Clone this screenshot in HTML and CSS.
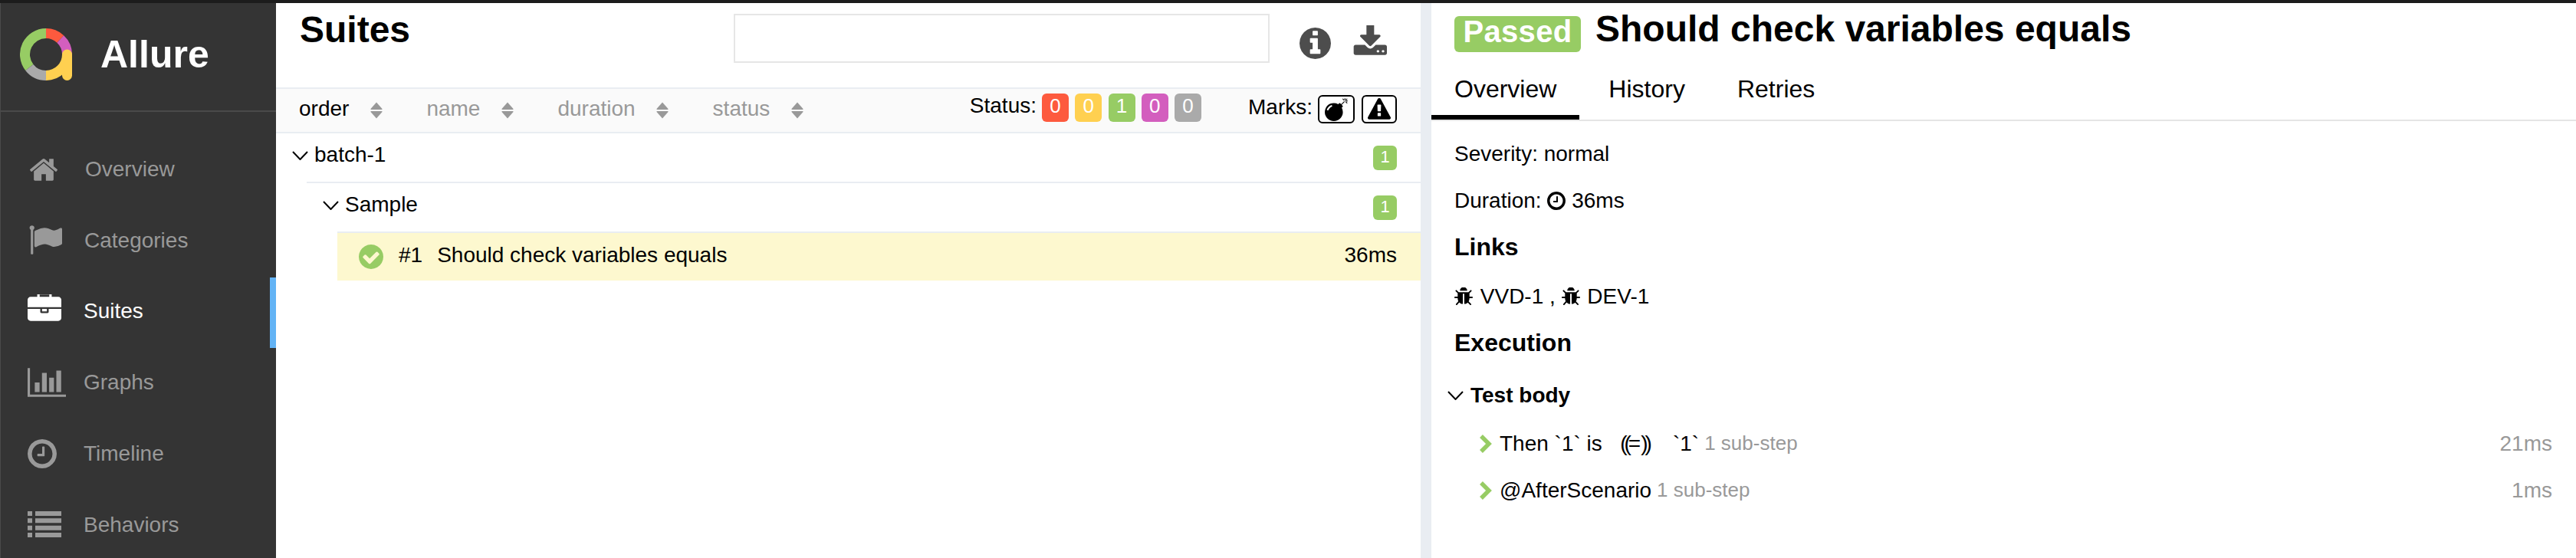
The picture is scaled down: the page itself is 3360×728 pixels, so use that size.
FILE: index.html
```html
<!DOCTYPE html>
<html lang="en">
<head>
<meta charset="utf-8">
<title>Allure</title>
<link rel="stylesheet" href="styles.css">
</head>
<body>
<svg class="defs" width="0" height="0" aria-hidden="true">
  <defs>
    <symbol id="sort" viewBox="0 0 16 22"><path class="sort-up" d="M8 0.500 15.500 9q.5 1-.8 1H1.300q-1.300 0-.8-1z"/><path class="sort-down" d="M1.300 12h13.400q1.300 0 .8 1L8 21.500.5 13q-.5-1 .8-1z"/></symbol>
    <symbol id="chev" viewBox="0 0 21 12"><path d="M1 1l9.500 10L20 1" fill="none" stroke="currentColor" stroke-width="2"/></symbol>
    <symbol id="clock" viewBox="128 128 1536 1536"><path fill="currentColor" d="M1024 544v448q0 14-9 23t-23 9h-320q-14 0-23-9t-9-23v-64q0-14 9-23t23-9h224v-352q0-14 9-23t23-9h64q14 0 23 9t9 23zm416 352q0-148-73-273t-198-198-273-73-273 73-198 198-73 273 73 273 198 198 273 73 273-73 198-198 73-273zm224 0q0 209-103 385.500t-279.500 279.500-385.500 103-385.500-103-279.500-279.500-103-385.500 103-385.500 279.500-279.500 385.500-103 385.500 103 279.500 279.500 103 385.500z"/></symbol>
    <symbol id="bug" viewBox="96 128 1600 1536"><path fill="currentColor" d="M1696 960q0 26-19 45t-45 19h-224q0 171-67 290l208 209q19 19 19 45t-19 45q-18 19-45 19t-45-19l-198-197q-5 5-15 13t-42 28.500-65 36.500-82 29-97 13v-896h-128v896q-51 0-101.500-13.500t-87-33-66-39-43.500-32.500l-15-14-183 207q-20 21-48 21-24 0-43-16-19-18-20.500-44.500t15.500-46.500l202-227q-58-114-58-274h-224q-26 0-45-19t-19-45 19-45 45-19h224v-294l-173-173q-19-19-19-45t19-45 45-19 45 19l173 173h844l173-173q19-19 45-19t45 19 19 45-19 45l-173 173v294h224q26 0 45 19t19 45zm-480-576h-640q0-133 93.500-226.500t226.500-93.500 226.500 93.500 93.500 226.500z"/></symbol>
    <symbol id="step" viewBox="0 0 17 24"><path d="M3 2l10 10L3 22" fill="none" stroke="currentColor" stroke-width="5.500"/></symbol>
  </defs>
</svg>
<div class="app">
  <aside class="side">
    <div class="brand">
      <svg class="logo" viewBox="0 0 68 68" aria-hidden="true">
        <g fill="none" stroke-width="13">
          <path stroke="#97cc64" d="M12.330 50.930A27.500 27.500 0 0 1 34 6.500"/>
          <path stroke="#fd5a3e" d="M34 6.500A27.500 27.500 0 0 1 52.760 13.900"/>
          <path stroke="#d35ebe" d="M52.760 13.900A27.500 27.500 0 0 1 61.500 34"/>
          <path stroke="#aaaaaa" d="M34 61.500A27.500 27.500 0 0 1 12.330 50.930"/>
          <path stroke="#ffd050" d="M61.500 34A27.500 27.500 0 0 1 34 61.500"/>
          <path stroke="#ffd050" stroke-linecap="round" d="M61.500 34V61.500"/>
        </g>
      </svg>
      <span class="brand-name">Allure</span>
    </div>
    <nav class="nav">
      <a class="nav-item"><svg class="nav-icon i-home" viewBox="0 128 1792 1408"><path fill="currentColor" d="M1472 992v480q0 26-19 45t-45 19h-384v-384h-256v384h-384q-26 0-45-19t-19-45v-480q0-1 .5-3t.5-3l575-474 575 474q1 2 1 6zm223-69l-62 74q-8 9-21 11h-3q-13 0-21-7l-692-577-692 577q-12 8-24 7-13-2-21-11l-62-74q-8-10-7-23.500t11-21.500l719-599q32-26 76-26t76 26l244 204v-195q0-14 9-23t23-9h192q14 0 23 9t9 23v408l219 182q10 8 11 21.500t-7 23.500z"/></svg><span>Overview</span></a>
      <a class="nav-item"><svg class="nav-icon i-flag" viewBox="0 128 1792 1536"><path fill="currentColor" d="M320 256q0 72-64 110v1266q0 13-9.500 22.500t-22.500 9.500h-64q-13 0-22.500-9.500t-9.500-22.500v-1266q-64-38-64-110 0-53 37.500-90.500t90.500-37.500 90.500 37.500 37.500 90.500zm1472 64v763q0 25-12.500 38.500t-39.500 27.500q-215 116-369 116-61 0-123.500-22t-108.500-48-115.500-48-142.500-22q-192 0-464 146-17 9-33 9-26 0-45-19t-19-45v-742q0-32 31-55 21-14 79-43 236-120 421-120 107 0 200 29t219 88q38 19 88 19 54 0 117.500-21t110-47 88-47 54.500-21q26 0 45 19t19 45z"/></svg><span>Categories</span></a>
      <a class="nav-item is-active"><svg class="nav-icon i-brief" viewBox="0 128 1792 1536"><path fill="currentColor" d="M640 256h512v-128h-512v128zm1152 640v480q0 66-47 113t-113 47h-1472q-66 0-113-47t-47-113v-480h672v160q0 26 19 45t45 19h320q26 0 45-19t19-45v-160h672zm-768 0v128h-256v-128h256zm768-480v384h-1792v-384q0-66 47-113t113-47h352v-160q0-40 28-68t68-28h576q40 0 68 28t28 68v160h352q66 0 113 47t47 113z"/></svg><span>Suites</span></a>
      <a class="nav-item"><svg class="nav-icon i-chart" viewBox="0 128 2048 1536"><path fill="currentColor" d="M640 896v512h-256v-512h256zm384-512v1024h-256v-1024h256zm1024 1152v128h-2048v-1536h128v1408h1920zm-640-896v768h-256v-768h256zm384-384v1152h-256v-1152h256z"/></svg><span>Graphs</span></a>
      <a class="nav-item"><svg class="nav-icon i-clock"><use href="#clock"/></svg><span>Timeline</span></a>
      <a class="nav-item"><svg class="nav-icon i-list" viewBox="0 0 44 34"><path fill="currentColor" d="M0 0h6v6H0zM10 0h34v6H10zM0 9.300h6v6H0zM10 9.300h34v6H10zM0 18.700h6v6H0zM10 18.700h34v6H10zM0 28h6v6H0zM10 28h34v6H10z"/></svg><span>Behaviors</span></a>
    </nav>
  </aside>
  <main class="pane-main">
    <header class="head">
      <h2 class="head-title">Suites</h2>
      <div class="search"></div>
      <svg class="head-info" viewBox="128 128 1536 1536"><path fill="currentColor" d="M1152 1376v-160q0-14-9-23t-23-9h-96v-512q0-14-9-23t-23-9h-320q-14 0-23 9t-9 23v160q0 14 9 23t23 9h96v320h-96q-14 0-23 9t-9 23v160q0 14 9 23t23 9h448q14 0 23-9t9-23zm-128-896v-160q0-14-9-23t-23-9h-192q-14 0-23 9t-9 23v160q0 14 9 23t23 9h192q14 0 23-9t9-23zm640 416q0 209-103 385.500t-279.500 279.500-385.500 103-385.500-103-279.500-279.500-103-385.500 103-385.500 279.500-279.500 385.500-103 385.500 103 279.500 279.500 103 385.500z"/></svg>
      <svg class="head-dl" viewBox="0 128 1728 1408"><path fill="currentColor" d="M1344 1344q0-26-19-45t-45-19-45 19-19 45 19 45 45 19 45-19 19-45zm256 0q0-26-19-45t-45-19-45 19-19 45 19 45 45 19 45-19 19-45zm128-224v320q0 40-28 68t-68 28h-1472q-40 0-68-28t-28-68v-320q0-40 28-68t68-28h465l135 136q58 56 136 56t136-56l136-136h464q40 0 68 28t28 68zm-325-569q17 41-14 70l-448 448q-18 19-45 19t-45-19l-448-448q-31-29-14-70 17-39 59-39h256v-448q0-26 19-45t45-19h256q26 0 45 19t19 45v448h256q42 0 59 39z"/></svg>
    </header>
    <div class="toolbar">
      <div class="sorters">
        <span class="sorter is-on"><span class="sort-name">order</span><svg class="sort-icon"><use href="#sort"/></svg></span>
        <span class="sorter"><span class="sort-name">name</span><svg class="sort-icon"><use href="#sort"/></svg></span>
        <span class="sorter"><span class="sort-name">duration</span><svg class="sort-icon"><use href="#sort"/></svg></span>
        <span class="sorter"><span class="sort-name">status</span><svg class="sort-icon"><use href="#sort"/></svg></span>
      </div>
      <div class="filters">
        <span class="filter-label">Status:</span>
        <span class="badges">
          <span class="badge b-failed">0</span>
          <span class="badge b-broken">0</span>
          <span class="badge b-passed">1</span>
          <span class="badge b-skipped">0</span>
          <span class="badge b-unknown">0</span>
        </span>
        <span class="filter-label marks-label">Marks:</span>
        <span class="mark"><svg viewBox="0 0 1792 1792"><path fill="currentColor" d="M571 589q-10-25-34-35t-49 0q-108 44-191 127t-127 191q-10 25 0 49t35 34q13 5 24 5 42 0 60-40 34-84 98.500-148.500t148.500-98.500q25-11 35-35t0-49zm942-356l46 46-244 243 68 68q19 19 19 45.500t-19 45.500l-64 64q89 161 89 343 0 143-55.500 273.500t-150 225-225 150-273.500 55.500-273.500-55.500-225-150-150-225-55.500-273.500 55.500-273.500 150-225 225-150 273.500-55.500q182 0 343 89l64-64q19-19 45.500-19t45.500 19l68 68zm8-56q-10 10-22 10-13 0-23-10l-91-90q-9-10-9-23t9-23q10-9 23-9t23 9l90 91q10 9 10 22.500t-10 22.500zm230 230q-11 9-23 9t-23-9l-90-91q-10-9-10-22.500t10-22.500q9-10 22.500-10t22.500 10l91 90q9 10 9 23t-9 23zm41-183q0 14-9 23t-23 9h-96q-14 0-23-9t-9-23 9-23 23-9h96q14 0 23 9t9 23zm-192-192v96q0 14-9 23t-23 9-23-9-9-23v-96q0-14 9-23t23-9 23 9 9 23zm151 55l-91 90q-10 10-22 10-13 0-23-10-10-9-10-22.500t10-22.500l90-91q10-9 23-9t23 9q9 10 9 23t-9 23z"/></svg></span>
        <span class="mark"><svg viewBox="0 0 1792 1792"><path fill="currentColor" d="M1024 1375v-190q0-14-9.500-23.500t-22.500-9.500h-192q-13 0-22.500 9.500t-9.500 23.500v190q0 14 9.500 23.500t22.500 9.500h192q13 0 22.500-9.500t9.500-23.500zm-2-374l18-459q0-12-10-19-13-11-24-11h-220q-11 0-24 11-10 7-10 21l17 457q0 10 10 16.500t24 6.500h185q14 0 23.500-6.500t10.500-16.500zm-14-934l768 1408q35 63-2 126-17 29-46.500 46t-63.500 17h-1536q-34 0-63.500-17t-46.500-46q-37-63-2-126l768-1408q17-31 47-49t65-18 65 18 47 49z"/></svg></span>
      </div>
    </div>
    <div class="tree">
      <div class="row">
        <svg class="chev"><use href="#chev"/></svg><span class="row-name">batch-1</span><span class="badge small b-passed">1</span>
      </div>
      <div class="nest">
        <div class="row">
          <svg class="chev"><use href="#chev"/></svg><span class="row-name">Sample</span><span class="badge small b-passed">1</span>
        </div>
        <div class="nest">
          <div class="row leaf">
            <svg class="ok" viewBox="128 128 1536 1536"><path fill="currentColor" d="M1412 734q0-28-18-46l-91-90q-19-19-45-19t-45 19l-408 407-226-226q-19-19-45-19t-45 19l-91 90q-18 18-18 46 0 27 18 45l362 362q19 19 45 19 27 0 46-19l543-543q18-18 18-45zm252 162q0 209-103 385.500t-279.500 279.500-385.500 103-385.500-103-279.500-279.500-103-385.500 103-385.500 279.500-279.500 385.500-103 385.500 103 279.500 279.500 103 385.500z"/></svg>
            <span class="leaf-order">#1</span><span class="row-name">Should check variables equals</span><span class="leaf-time">36ms</span>
          </div>
        </div>
      </div>
    </div>
  </main>
  <div class="gutter"></div>
  <section class="pane-detail">
    <header class="detail-head">
      <span class="status-tag">Passed</span>
      <h2 class="detail-title">Should check variables equals</h2>
    </header>
    <div class="tabs">
      <span class="tab is-on">Overview</span>
      <span class="tab">History</span>
      <span class="tab">Retries</span>
    </div>
    <div class="detail-body">
      <p class="line">Severity: normal</p>
      <p class="line">Duration: <svg class="inline-icon"><use href="#clock"/></svg> 36ms</p>
      <h3 class="sub">Links</h3>
      <p class="line"><svg class="inline-icon bug"><use href="#bug"/></svg> VVD-1 , <svg class="inline-icon bug"><use href="#bug"/></svg> DEV-1</p>
      <h3 class="sub">Execution</h3>
      <div class="stage"><svg class="chev"><use href="#chev"/></svg><b>Test body</b></div>
      <div class="steps">
        <div class="step"><svg class="step-arrow"><use href="#step"/></svg><span class="step-name">Then `1` is &nbsp;&nbsp;<span class="tight">((</span>=<span class="tight">))</span>&nbsp;&nbsp;&nbsp;&nbsp;`1`</span> <span class="step-sub">1 sub-step</span><span class="step-time">21ms</span></div>
        <div class="step"><svg class="step-arrow"><use href="#step"/></svg><span class="step-name">@AfterScenario</span> <span class="step-sub">1 sub-step</span><span class="step-time">1ms</span></div>
      </div>
    </div>
  </section>
</div>
</body>
</html>
```
FILE: styles.css
```css
* { box-sizing: border-box; }
html, body { margin: 0; height: 100%; overflow: hidden; }
body {
  background: #fff;
  color: #000;
  font: 28px/1.4 "Liberation Sans", Arial, sans-serif;
  border-top: 4px solid #1c1c1c;
}
.defs { display: block; height: 0; width: 0; }
.app { display: flex; height: 724px; overflow: hidden; }

.side { width: 360px; flex: none; background: #343434; border-left: 1px solid #4a4a4a; color: #999; }
.brand { display: flex; align-items: center; height: 142px; border-bottom: 2px solid #4a4a4a; padding-left: 25px; }
.logo { width: 68px; height: 68px; flex: none; margin-top: -6px; }
.brand-name { margin-left: 37px; font-size: 50px; font-weight: 700; color: #fff; line-height: 1; margin-top: -6px; }
.nav { padding-top: 30px; }
.nav-item { display: flex; align-items: center; height: 92.800px; padding-left: 35px; border-right: 8px solid transparent; }
.nav-item span { margin-bottom: 4px; }
.nav-item.is-active { color: #fff; border-right-color: #63b3f5; }
.nav-icon { width: 40px; height: 36px; margin: 0 33px 4px 0; flex: none; }
.i-home { width: 40px; height: 32px; margin-right: 34px; margin-left: 1px; }
.i-flag { width: 44px; height: 38px; margin-right: 29px; margin-left: 1px; }
.i-brief { width: 44px; height: 38px; margin-right: 29px; margin-bottom: 9px; }
.i-chart { width: 50px; height: 38px; margin-right: 23px; }
.i-clock { width: 38px; height: 38px; margin-right: 35px; }
.i-list { width: 44px; height: 34px; margin-right: 29px; }

.pane-main { width: 1493px; flex: none; }
.head { display: flex; align-items: flex-start; height: 110px; padding-left: 31px; }
.head-title { margin: 7px 0 0; font-size: 48px; line-height: 56px; font-weight: 700; width: 566px; flex: none; }
.search { width: 699px; height: 64px; margin-top: 14px; border: 2px solid #e6e6e6; flex: none; }
.head-info { width: 41px; height: 41px; margin: 32px 0 0 39px; color: #4d4d4d; flex: none; }
.head-dl { width: 45px; height: 41px; margin: 29px 0 0 28px; color: #4d4d4d; flex: none; }

.toolbar { display: flex; justify-content: space-between; align-items: center; height: 60px; background: #fafafa; border-top: 2px solid #e9edf2; border-bottom: 2px solid #e9edf2; padding: 0 31px 0 30px; }
.sorters { display: flex; }
.sorter { display: flex; align-items: center; margin-right: 57.500px; color: #999; }
.sorter.is-on { color: #000; }
.sort-name { margin-bottom: 5px; }
.sort-icon { width: 16px; height: 22px; margin-left: 27.500px; flex: none; }
.sort-up, .sort-down { fill: #999; }
.is-on .sort-up { fill: #000; }

.filters { display: flex; align-items: center; }
.filter-label { margin-right: 7px; margin-bottom: 13px; }
.badges { display: flex; gap: 8.250px; margin-bottom: 7px; }
.marks-label { margin-left: 61px; margin-bottom: 8px; }
.badge { display: block; width: 35px; height: 37px; font-size: 26px; line-height: 32px; border-radius: 6px; text-align: center; color: #fff; background: #aaa; }
.b-failed { background: #fd5a3e; }
.b-broken { background: #ffd050; }
.b-passed { background: #97cc64; }
.b-skipped { background: #d35ebe; }
.b-unknown { background: #aaa; }
.badge.small { width: 31px; height: 32px; line-height: 29px; font-size: 22px; margin-left: auto; }
.mark { display: flex; align-items: center; justify-content: center; width: 48px; height: 37px; margin-bottom: 3px; border: 2px solid #000; border-radius: 6px; background: #fff; }
.mark + .mark { width: 46px; margin-left: 9px; }
.mark svg { width: 30px; height: 30px; }

.row { display: flex; align-items: center; height: 63px; padding: 0 31px 0 21px; }
.row-name { margin-bottom: 8px; }
.nest > .row { border-top: 2px solid #e9edf2; height: 65px; }
.nest { margin-left: 40px; }
.chev { width: 21px; height: 12px; flex: none; margin: 0 8px 5px 0; }
.leaf { background: #fdf8cf; padding-left: 28px; }
.nest > .leaf { height: 64px; }
.leaf .row-name, .leaf-order, .leaf-time { margin-bottom: 4px; }
.ok { width: 32px; height: 32px; color: #97cc64; margin-right: 20px; flex: none; }
.leaf-order { margin-right: 19px; }
.leaf-time { margin-left: auto; }

.gutter { width: 14px; flex: none; background: #e9edf2; }
.pane-detail { flex: 1; min-width: 0; }
.detail-head { display: flex; align-items: flex-start; padding: 17px 0 0 30px; height: 91px; }
.status-tag { display: block; width: 165px; height: 47px; background: #97cc64; color: #fff; border-radius: 6px; font-size: 40px; line-height: 40px; font-weight: 700; text-align: center; margin-right: 19px; letter-spacing: 0.3px; }
.detail-title { margin: -11px 0 0; font-size: 48px; line-height: 56px; font-weight: 700; }
.tabs { display: flex; height: 63px; border-bottom: 2px solid #e5e5e5; }
.tab { height: 61px; padding: 0 30px; margin-right: 8px; font-size: 32px; line-height: 42px; }
.tab.is-on { border-bottom: 6px solid #000; }
.detail-body { padding: 23px 31px 0 30px; }
.line { margin: 0; height: 61px; }
.inline-icon { width: 24px; height: 24px; vertical-align: -3px; }
.inline-icon.bug { margin-right: 2px; }
.sub { margin: -1px 0 25px; font-size: 32px; line-height: 40px; font-weight: 700; }
.stage { display: flex; align-items: center; margin: 0 0 8px -9px; height: 48px; }
.stage .chev { margin: 0 9px 0 0; }
.step { display: flex; align-items: center; height: 61px; padding-left: 32px; }
.step-arrow { width: 17px; height: 24px; color: #97cc64; margin-right: 10px; flex: none; }
.step-name { white-space: pre; }
.tight { letter-spacing: -4px; }
.step-sub { color: #999; font-size: 26px; margin-left: 7px; }
.step-time { margin-left: auto; color: #999; }
```
